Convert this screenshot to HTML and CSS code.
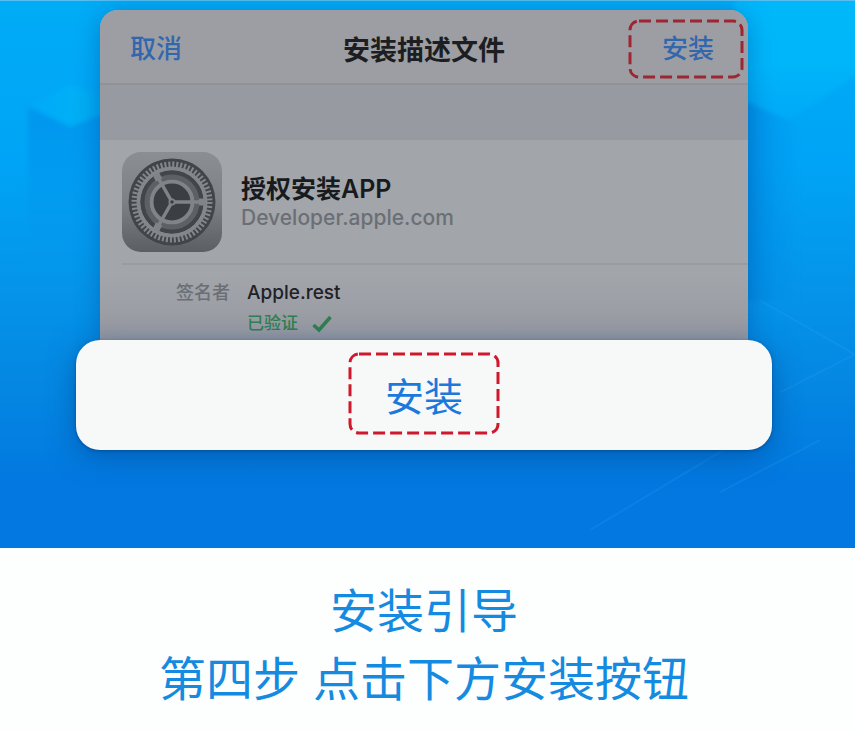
FILE: index.html
```html
<!DOCTYPE html>
<html lang="zh-CN">
<head>
<meta charset="utf-8">
<meta name="viewport" content="width=device-width, initial-scale=1">
<title>安装引导</title>
<link rel="stylesheet" href="styles.css">
</head>
<body>
<main>
  <section class="stage">
    <svg class="backdrop" viewBox="0 0 855 548" preserveAspectRatio="none" aria-hidden="true">
      <defs>
        <linearGradient id="cubeTop" x1="0" x2="1"><stop offset="0" stop-color="#00b4fa" stop-opacity=".1"/><stop offset=".6" stop-color="#04b2f6" stop-opacity=".8"/><stop offset="1" stop-color="#08a8f2" stop-opacity=".4"/></linearGradient>
        <linearGradient id="cubeSide" x1="0" y1="0" x2="0" y2="1"><stop offset="0" stop-color="#0690ea" stop-opacity=".7"/><stop offset="1" stop-color="#0690ea" stop-opacity="0"/></linearGradient>
        <linearGradient id="cubeRight" x1="0" x2="1"><stop offset="0" stop-color="#0688e2" stop-opacity=".8"/><stop offset="1" stop-color="#0688e2" stop-opacity="0"/></linearGradient>
        <linearGradient id="skyRight" x1="0" y1="0" x2="0" y2="1"><stop offset="0" stop-color="#00b7fa"/><stop offset=".55" stop-color="#00b6fa"/><stop offset="1" stop-color="#04acf8" stop-opacity=".6"/></linearGradient>
        <filter id="soft"><feGaussianBlur stdDeviation="2"/></filter>
      </defs>
      <g filter="url(#soft)">
        <path d="M735 -8H865V68L788 120L735 96Z" fill="url(#skyRight)"/>
        <path d="M735 96L800 124V300H735Z" fill="url(#cubeRight)"/>
        <path d="M28 106L70 84L112 100V110L70 126Z" fill="url(#cubeTop)"/>
        <path d="M28 106L70 126L112 110V260H28Z" fill="url(#cubeSide)"/>
      </g>
      <path d="M760 300L855 354M855 354L780 392M740 440L590 530M820 440L720 492" fill="none" stroke="#35a5f4" stroke-opacity=".2" stroke-width="2"/>
    </svg>

    <div class="card">
      <header class="bar">
        <button class="link" type="button">取消</button>
        <h1 class="title">安装描述文件</h1>
        <button class="link marked marked-small" type="button">
          <svg class="dash" aria-hidden="true"><rect class="ring" x="2" y="2" rx="9"/></svg>安装
        </button>
      </header>
      <div class="band"></div>
      <div class="app">
        <svg class="icon" viewBox="0 0 100 100" aria-hidden="true">
          <defs>
            <linearGradient id="plate" x1="0" y1="0" x2="0" y2="1"><stop offset="0" stop-color="#8b8f93"/><stop offset=".5" stop-color="#7d8185"/><stop offset="1" stop-color="#5b5f64"/></linearGradient>
          </defs>
          <rect width="100" height="100" rx="19" fill="url(#plate)"/>
          <circle cx="50" cy="50" r="43.500" fill="#41454a"/>
          <circle cx="50" cy="50" r="37.500" fill="none" stroke="#83878b" stroke-width="6" stroke-dasharray="2 1.927"/>
          <circle cx="50" cy="50" r="33.500" fill="none" stroke="#83878b" stroke-width="4"/>
          <circle cx="50" cy="50" r="31.500" fill="#42464b"/>
          <circle cx="50" cy="50" r="25" fill="none" stroke="#5d6166" stroke-width="5"/>
          <circle cx="50" cy="50" r="20.500" fill="#3b3f44" stroke="#808488" stroke-width="4"/>
          <path d="M50 50H83M50 50L34 22M50 50L34 78" stroke="#808488" stroke-width="3.500"/>
          <path d="M77 50H84M37 28L34 22M37 72L34 78" stroke="#808488" stroke-width="7"/>
          <circle cx="50" cy="50" r="3.500" fill="#808488"/>
          <circle cx="50" cy="50" r="1.800" fill="#3b3f44"/>
        </svg>
        <div class="info">
          <h2 class="name">授权安装APP</h2>
          <p class="domain">Developer.apple.com</p>
        </div>
      </div>
      <dl class="signer">
        <dt class="label">签名者</dt>
        <dd class="value">
          <span>Apple.rest</span>
          <span class="verified">已验证
            <svg class="check" viewBox="0 0 20 18" aria-hidden="true"><path d="M1.500 10L7 15L18.500 2" fill="none" stroke="currentColor" stroke-width="3.500"/></svg>
          </span>
        </dd>
      </dl>
    </div>

    <div class="sheet">
      <button class="install marked" type="button">
        <svg class="dash" aria-hidden="true"><rect class="ring" x="2" y="2" rx="9"/></svg>安装
      </button>
    </div>
  </section>

  <section class="caption">
    <p>安装引导</p>
    <p>第四步 点击下方安装按钮</p>
  </section>
</main>
</body>
</html>
```

FILE: styles.css
```css
* {
  box-sizing: border-box;
}

body,
h1,
h2,
p,
dl,
dd {
  margin: 0;
}

body {
  background: #fdfefe;
  font-family: Inter, "Noto Sans CJK SC", sans-serif;
}

button {
  padding: 0;
  border: 0;
  background: none;
  font: inherit;
  cursor: pointer;
}

.stage {
  position: relative;
  padding: 9px 83px 98px 76px;
  border-top: 1px solid #58bdf0;
  background: linear-gradient(#00acf6 0%, #00a4f6 30%, #0496ea 50%, #0486e2 72%, #0278e0 88%, #0278e0 100%);
}

.backdrop {
  position: absolute;
  inset: 0;
  width: 100%;
  height: 100%;
}

.card {
  position: relative;
  margin: 0 24px;
  border-radius: 18px 18px 0 0;
  overflow: hidden;
  background: linear-gradient(#a2a5aa 80%, #9799a1);
  box-shadow: 0 4px 24px rgba(0, 70, 150, 0.45);
}

.bar {
  display: grid;
  grid-template-columns: 1fr auto 1fr;
  align-items: center;
  height: 75px;
  padding: 4px 4px 0;
  border-bottom: 2px solid #909299;
  background: #9d9ea3;
}

.link {
  justify-self: start;
  padding-left: 26px;
  color: #3267ad;
  font-size: 26px;
  font-weight: 500;
  line-height: 60px;
}

.title {
  color: #1c1e22;
  font-size: 27px;
  font-weight: 600;
}

.marked {
  position: relative;
}

.marked-small {
  justify-self: end;
  width: 116px;
  height: 60px;
  padding-left: 4px;
}

.dash {
  position: absolute;
  inset: 0;
  width: 100%;
  height: 100%;
}

.ring {
  width: calc(100% - 4px);
  height: calc(100% - 4px);
  fill: none;
  stroke: #d0182c;
  stroke-width: 3px;
  stroke-dasharray: 12px 5px;
}

.marked-small .ring {
  stroke: #9c2733;
}

.band {
  height: 55px;
  background: #989aa2;
}

.app {
  display: flex;
  align-items: center;
  gap: 19px;
  height: 125px;
  margin-left: 22px;
  border-bottom: 2px solid #999ba1;
}

.icon {
  width: 100px;
  height: 100px;
}

.name {
  color: #181a1e;
  font-size: 25px;
  font-weight: 600;
  line-height: 32px;
}

.domain {
  color: #6b6f75;
  font-size: 21px;
  font-weight: 500;
  line-height: 26px;
}

.signer {
  display: flex;
  gap: 17px;
  height: 75px;
  padding: 12px 0 0 76px;
  font-size: 18px;
  font-weight: 500;
  line-height: 31px;
}

.label {
  color: #6b6f75;
}

.value {
  display: flex;
  flex-direction: column;
  color: #1f2125;
  font-size: 19px;
}

.verified {
  display: flex;
  align-items: center;
  gap: 14px;
  color: #2f8050;
  font-size: 17px;
}

.check {
  width: 20px;
  height: 18px;
}

.sheet {
  position: relative;
  display: flex;
  justify-content: center;
  align-items: flex-start;
  height: 110px;
  padding-top: 12px;
  border-radius: 24px;
  background: #f7f8f8;
  box-shadow: 0 6px 28px rgba(0, 60, 130, 0.5), 0 1px 3px rgba(0, 50, 110, 0.5);
}

.install {
  width: 152px;
  height: 83px;
  color: #1b78dc;
  font-size: 39px;
}

.caption {
  padding: 29px 83px 16px 76px;
  color: #148ae0;
  font-size: 47px;
  line-height: 68px;
  text-align: center;
  white-space: nowrap;
}

.caption p {
  display: flex;
  justify-content: center;
}
```
